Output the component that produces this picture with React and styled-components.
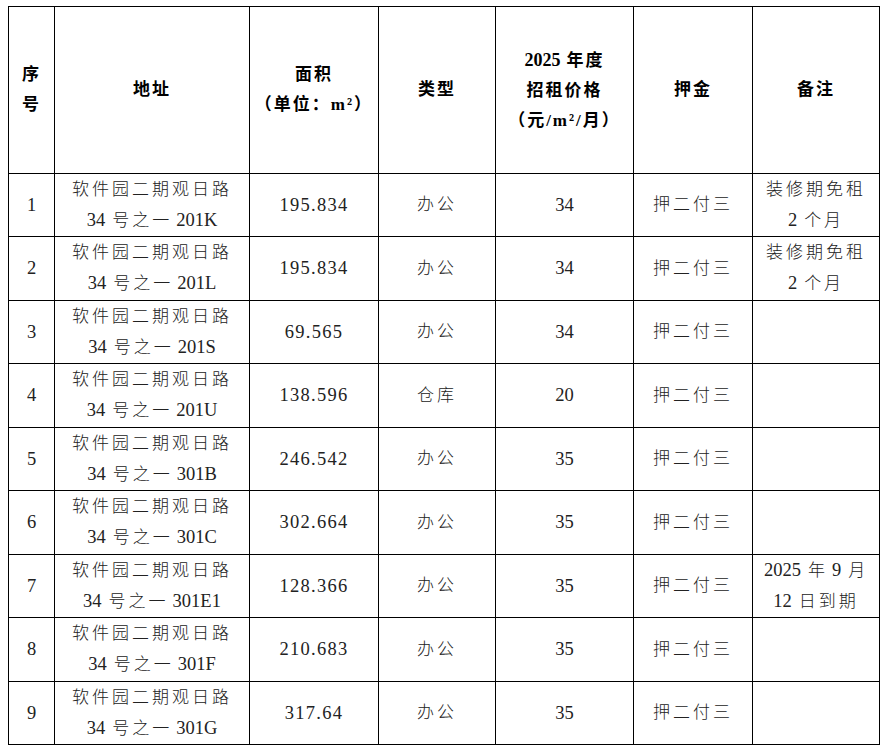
import React from 'react';
import styled, { createGlobalStyle } from 'styled-components';

const Global = createGlobalStyle`
  html, body { margin: 0; padding: 0; background: #ffffff; }
  body { padding: 6px 0 0 8px; }
`;

const Table = styled.table`
  border-collapse: collapse;
  table-layout: fixed;
  width: 872px;
  font-family: "Liberation Serif", "Noto Sans CJK SC", serif;
  font-size: 17px;
`;

const HeadRow = styled.tr`
  height: 167px;
`;

const Row = styled.tr`
  height: ${(p) => (p.$odd ? 63 : 64)}px;
`;

const HeadCell = styled.th`
  border: 1px solid #000;
  padding: 0 2px;
  text-align: center;
  vertical-align: middle;
  font-weight: 700;
  color: #000;
  line-height: 30px;
  letter-spacing: 2px;
`;

const Cell = styled.td`
  border: 1px solid #000;
  padding: 0 2px;
  text-align: center;
  vertical-align: middle;
  font-weight: 300;
  color: #222;
  line-height: 30px;
  letter-spacing: 3px;
  white-space: nowrap;
`;

const Num = styled.span`
  font-size: 18.5px;
  font-weight: 400;
  letter-spacing: ${(p) => (p.$wide ? '1.3px' : '0')};
  margin-left: ${(p) => p.$ml || 0}px;
  margin-right: ${(p) => p.$mr || 0}px;
`;

const HeadNum = styled.span`
  font-size: 18px;
  letter-spacing: 0;
  margin-right: 6px;
`;

const Line = styled.div`
  display: block;
`;

const widths = [46, 195, 129, 117, 138, 119, 127];

const rows = [
  ['1', '201K', '195.834', '办公', '34', 'rent'],
  ['2', '201L', '195.834', '办公', '34', 'rent'],
  ['3', '201S', '69.565', '办公', '34', null],
  ['4', '201U', '138.596', '仓库', '20', null],
  ['5', '301B', '246.542', '办公', '35', null],
  ['6', '301C', '302.664', '办公', '35', null],
  ['7', '301E1', '128.366', '办公', '35', 'expire'],
  ['8', '301F', '210.683', '办公', '35', null],
  ['9', '301G', '317.64', '办公', '35', null],
];

function Note({ kind }) {
  if (kind === 'rent') {
    return (
      <>
        <Line>装修期免租</Line>
        <Line>
          <Num $mr={7}>2</Num>个月
        </Line>
      </>
    );
  }
  if (kind === 'expire') {
    return (
      <>
        <Line>
          <Num $mr={7}>2025</Num>年<Num $ml={4} $mr={7}>9</Num>月
        </Line>
        <Line>
          <Num $mr={7}>12</Num>日到期
        </Line>
      </>
    );
  }
  return null;
}

export default function App() {
  return (
    <>
      <Global />
      <Table>
        <colgroup>
          {widths.map((w, i) => (
            <col key={i} style={{ width: w }} />
          ))}
        </colgroup>
        <thead>
          <HeadRow>
            <HeadCell>
              <Line>序</Line>
              <Line>号</Line>
            </HeadCell>
            <HeadCell>地址</HeadCell>
            <HeadCell>
              <Line>面积</Line>
              <Line>（单位：m²）</Line>
            </HeadCell>
            <HeadCell>类型</HeadCell>
            <HeadCell>
              <Line>
                <HeadNum>2025</HeadNum>年度
              </Line>
              <Line>招租价格</Line>
              <Line>（元/m²/月）</Line>
            </HeadCell>
            <HeadCell>押金</HeadCell>
            <HeadCell>备注</HeadCell>
          </HeadRow>
        </thead>
        <tbody>
          {rows.map((r, i) => (
            <Row key={r[0]} $odd={i % 2 === 0}>
              <Cell>
                <Num>{r[0]}</Num>
              </Cell>
              <Cell>
                <Line>软件园二期观日路</Line>
                <Line>
                  <Num $mr={7}>34</Num>号之一<Num $ml={4}>{r[1]}</Num>
                </Line>
              </Cell>
              <Cell>
                <Num $wide>{r[2]}</Num>
              </Cell>
              <Cell>{r[3]}</Cell>
              <Cell>
                <Num>{r[4]}</Num>
              </Cell>
              <Cell>押二付三</Cell>
              <Cell>
                <Note kind={r[5]} />
              </Cell>
            </Row>
          ))}
        </tbody>
      </Table>
    </>
  );
}
